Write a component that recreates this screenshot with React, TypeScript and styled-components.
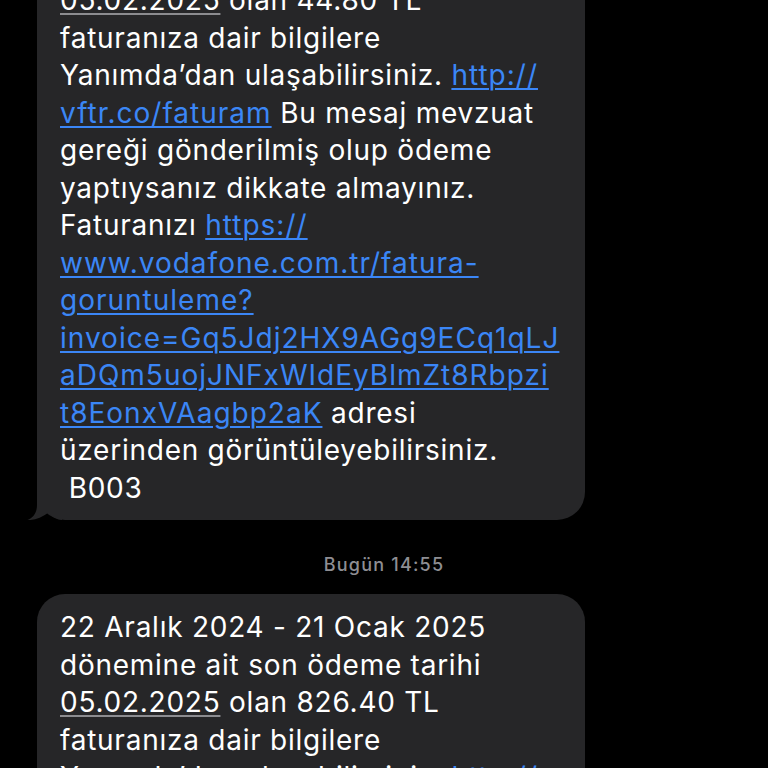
import React from "react"
import styled, { createGlobalStyle } from "styled-components"

const GlobalStyle = createGlobalStyle`
	html, body {
		margin: 0;
		padding: 0;
		background: #000;
		overflow: hidden;
	}
`

const Screen = styled.div`
	height: 768px;
	overflow: hidden;
	background: #000;
	font-family: Inter, "Noto Sans", sans-serif;
	-webkit-font-smoothing: antialiased;
`

// scrolled thread: the first bubble starts above the top edge
const Thread = styled.div<{ $offset: number }>`
	display: flex;
	flex-direction: column;
	margin-top: ${({ $offset }) => -$offset}px;
`

const Row = styled.div`
	display: flex;
	padding-left: 37px;
`

const Bubble = styled.div`
	position: relative;
	box-sizing: border-box;
	width: 548px;
	padding: 15px 22px 13px 23px;
	background: #262628;
	border-radius: 28px;
	color: #fff;
	font-size: 28px;
	line-height: 37.5px;
	letter-spacing: 0.75px;
`

const Line = styled.div`
	white-space: pre;
`

const Link = styled.span`
	color: #3b86f6;
	letter-spacing: 1px;
	text-decoration: underline;
	text-decoration-thickness: 1.5px;
	text-underline-offset: 3px;
`

const DateMark = styled.span`
	text-decoration: underline;
	text-decoration-color: #8c8c90;
	text-decoration-thickness: 2px;
	text-underline-offset: 3px;
`

const Stamp = styled.div`
	margin: 34px 0 18px;
	text-align: center;
	color: #8e8e93;
	font-size: 18px;
	line-height: 22px;
	font-weight: 500;
	letter-spacing: 1.2px;
`

const TailSvg = styled.svg`
	position: absolute;
	left: -10px;
	bottom: 0;
	width: 40px;
	height: 30px;
`

const Tail = () => (
	<TailSvg viewBox="0 0 40 30">
		<path
			d="M10,0 L10,15 C10,23 6,28 0.5,30 C8,30.5 15,27 21,23 C26,27 30,30 35,30 L35,0 Z"
			fill="#262628"
		/>
	</TailSvg>
)

export default function App() {
	return (
		<Screen>
			<GlobalStyle />
			<Thread $offset={108}>
				<Row>
					<Bubble>
						<Line>22 Aralık 2024 - 21 Ocak 2025</Line>
						<Line>dönemine ait son ödeme tarihi</Line>
						<Line><DateMark>05.02.2025</DateMark> olan 44.80 TL</Line>
						<Line>faturanıza dair bilgilere</Line>
						<Line>Yanımda’dan ulaşabilirsiniz. <Link>http://</Link></Line>
						<Line><Link>vftr.co/faturam</Link> Bu mesaj mevzuat</Line>
						<Line>gereği gönderilmiş olup ödeme</Line>
						<Line>yaptıysanız dikkate almayınız.</Line>
						<Line>Faturanızı <Link>https://</Link></Line>
						<Line><Link>www.vodafone.com.tr/fatura-</Link></Line>
						<Line><Link>goruntuleme?</Link></Line>
						<Line><Link>invoice=Gq5Jdj2HX9AGg9ECq1qLJ</Link></Line>
						<Line><Link>aDQm5uojJNFxWIdEyBlmZt8Rbpzi</Link></Line>
						<Line><Link>t8EonxVAagbp2aK</Link> adresi</Line>
						<Line>üzerinden görüntüleyebilirsiniz.</Line>
						<Line> B003</Line>
						<Tail />
					</Bubble>
				</Row>
				<Stamp>Bugün 14:55</Stamp>
				<Row>
					<Bubble>
						<Line>22 Aralık 2024 - 21 Ocak 2025</Line>
						<Line>dönemine ait son ödeme tarihi</Line>
						<Line><DateMark>05.02.2025</DateMark> olan 826.40 TL</Line>
						<Line>faturanıza dair bilgilere</Line>
						<Line>Yanımda’dan ulaşabilirsiniz. <Link>http://</Link></Line>
						<Line><Link>vftr.co/faturam</Link> Bu mesaj mevzuat</Line>
					</Bubble>
				</Row>
			</Thread>
		</Screen>
	)
}
